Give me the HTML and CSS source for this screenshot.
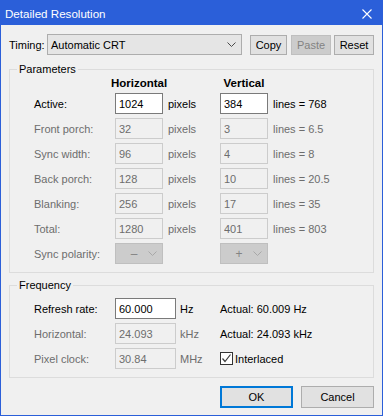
FILE: index.html
```html
<!DOCTYPE html>
<html>
<head>
<meta charset="utf-8">
<link rel="stylesheet" href="styles.css">
</head>
<body>
<div class="window">
  <div class="titlebar">
    <span class="title">Detailed Resolution</span>
    <svg class="close" width="10" height="10" viewBox="0 0 10 10"><path d="M0.5 0.5 L9.5 9.5 M9.5 0.5 L0.5 9.5" stroke="#fff" stroke-width="1.1" fill="none"/></svg>
  </div>
  <div class="content">
    <div class="timing-row">
      <span class="timing-label">Timing:</span>
      <div class="combo combo-timing">
        <span class="combo-text">Automatic CRT</span>
        <svg class="chev" width="9" height="5" viewBox="0 0 9 5"><path d="M0.5 0.5 L4.5 4.5 L8.5 0.5" stroke="#4a4a4a" fill="none"/></svg>
      </div>
      <button class="btn btn-copy">Copy</button>
      <button class="btn btn-paste" disabled>Paste</button>
      <button class="btn btn-reset">Reset</button>
    </div>

    <fieldset class="group">
      <legend>Parameters</legend>
      <div class="param-grid">
        <span></span>
        <div class="head"><span>Horizontal</span></div>
        <span></span>
        <div class="head"><span>Vertical</span></div>
        <span></span>

        <span class="lbl">Active:</span>
        <input class="field" value="1024">
        <span class="unit">pixels</span>
        <input class="field" value="384">
        <span class="unit">lines = 768</span>

        <span class="lbl dim">Front porch:</span>
        <input class="field" value="32" disabled>
        <span class="unit dim">pixels</span>
        <input class="field" value="3" disabled>
        <span class="unit dim">lines = 6.5</span>

        <span class="lbl dim">Sync width:</span>
        <input class="field" value="96" disabled>
        <span class="unit dim">pixels</span>
        <input class="field" value="4" disabled>
        <span class="unit dim">lines = 8</span>

        <span class="lbl dim">Back porch:</span>
        <input class="field" value="128" disabled>
        <span class="unit dim">pixels</span>
        <input class="field" value="10" disabled>
        <span class="unit dim">lines = 20.5</span>

        <span class="lbl dim">Blanking:</span>
        <input class="field" value="256" disabled>
        <span class="unit dim">pixels</span>
        <input class="field" value="17" disabled>
        <span class="unit dim">lines = 35</span>

        <span class="lbl dim">Total:</span>
        <input class="field" value="1280" disabled>
        <span class="unit dim">pixels</span>
        <input class="field" value="401" disabled>
        <span class="unit dim">lines = 803</span>

        <span class="lbl dim">Sync polarity:</span>
        <div class="combo combo-pol">
          <span class="pol-text">&ndash;</span>
          <svg class="chev" width="9" height="5" viewBox="0 0 9 5"><path d="M0.5 0.5 L4.5 4.5 L8.5 0.5" stroke="#a8a8a8" fill="none"/></svg>
        </div>
        <span></span>
        <div class="combo combo-pol">
          <span class="pol-text">+</span>
          <svg class="chev" width="9" height="5" viewBox="0 0 9 5"><path d="M0.5 0.5 L4.5 4.5 L8.5 0.5" stroke="#a8a8a8" fill="none"/></svg>
        </div>
        <span></span>
      </div>
    </fieldset>

    <fieldset class="group group-freq">
      <legend>Frequency</legend>
      <div class="freq-grid">
        <span class="lbl">Refresh rate:</span>
        <input class="field field-wide" value="60.000">
        <span class="unit">Hz</span>
        <span class="actual">Actual: 60.009 Hz</span>

        <span class="lbl dim">Horizontal:</span>
        <input class="field field-wide" value="24.093" disabled>
        <span class="unit dim">kHz</span>
        <span class="actual">Actual: 24.093 kHz</span>

        <span class="lbl dim">Pixel clock:</span>
        <input class="field field-wide" value="30.84" disabled>
        <span class="unit dim">MHz</span>
        <label class="check">
          <span class="box"><svg width="11" height="11" viewBox="0 0 11 11"><path d="M1.5 5.5 L4 8.5 L9.5 1.5" stroke="#3c3c3c" stroke-width="1.2" fill="none"/></svg></span>
          <span>Interlaced</span>
        </label>
      </div>
    </fieldset>

    <div class="actions">
      <button class="btn btn-dlg btn-ok">OK</button>
      <button class="btn btn-dlg">Cancel</button>
    </div>
  </div>
</div>
</body>
</html>
```

FILE: styles.css
```css
html, body {
  margin: 0;
  padding: 0;
  background: #f0f0f0;
}
body {
  font-family: "Liberation Sans", Arial, sans-serif;
  font-size: 11px;
  color: #000;
}
.window {
  width: 383px;
  height: 416px;
  box-sizing: border-box;
  border: 1px solid #2b5fd9;
  background: #f0f0f0;
  display: flex;
  flex-direction: column;
}
.titlebar {
  height: 24px;
  flex: none;
  background: #2b5fd9;
  display: flex;
  align-items: center;
  padding: 0 10px 0 4px;
  color: #fff;
}
.title {
  flex: 1;
  font-size: 11.6px;
  padding-top: 1px;
}
.close {
  display: block;
  margin-top: 1px;
}
.content {
  padding: 9px 8px 0;
}
.timing-row {
  display: flex;
  align-items: center;
  height: 21px;
}
.timing-label {
  width: 38px;
  flex: none;
}
.combo {
  box-sizing: border-box;
  display: flex;
  align-items: center;
  height: 21px;
}
.combo-timing {
  width: 195px;
  margin-right: 8px;
  background: #e5e5e5;
  border: 1px solid #adadad;
  padding: 0 5px 0 3px;
}
.combo-text {
  flex: 1;
}
.chev {
  display: block;
}
.btn {
  box-sizing: border-box;
  height: 20px;
  padding: 0;
  margin: 0;
  font-family: "Liberation Sans", Arial, sans-serif;
  font-size: 11px;
  color: #000;
  background: #e1e1e1;
  border: 1px solid #adadad;
  border-radius: 0;
}
.btn-copy {
  width: 37px;
  margin-right: 4px;
}
.btn-paste {
  width: 40px;
  margin-right: 3px;
  background: #cccccc;
  border-color: #bfbfbf;
  color: #838383;
}
.btn-reset {
  width: 40px;
}
.group {
  margin: 7px 0 0;
  padding: 0;
  border: 1px solid #dcdcdc;
  min-width: 0;
}
.group legend {
  margin-left: 7px;
  padding: 0 2px;
  line-height: 14px;
  font-size: 11px;
}
.group-freq {
  margin-top: 5px;
}
.param-grid {
  display: grid;
  grid-template-columns: 81px 48px 57px 48px auto;
  grid-template-rows: 13px repeat(7, 21px);
  row-gap: 4px;
  align-items: center;
  padding: 0 0 8px 24px;
}
.head {
  display: flex;
  justify-content: center;
  font-weight: bold;
  font-size: 11.5px;
  line-height: 10px;
  white-space: nowrap;
}
.lbl, .unit, .actual {
  white-space: nowrap;
}
.unit {
  padding-left: 5px;
}
.dim {
  color: #6d6d6d;
}
.field {
  box-sizing: border-box;
  width: 48px;
  height: 21px;
  margin: 0;
  padding: 0 3px;
  border: 1px solid #7a7a7a;
  border-radius: 0;
  background: #fff;
  font-family: "Liberation Sans", Arial, sans-serif;
  font-size: 11px;
  color: #000;
  outline: none;
}
.field:disabled {
  border-color: #cccccc;
  background: #f0f0f0;
  color: #6d6d6d;
  -webkit-text-fill-color: #6d6d6d;
}
.field-wide {
  width: 61px;
}
.combo-pol {
  width: 48px;
  background: #cccccc;
  border: 1px solid #bfbfbf;
  padding: 0 5px 0 0;
  color: #838383;
}
.pol-text {
  flex: 1;
  text-align: center;
  padding-left: 4px;
  font-size: 12px;
}
.freq-grid {
  display: grid;
  grid-template-columns: 81px 61px 44px auto;
  grid-template-rows: repeat(3, 21px);
  row-gap: 4px;
  align-items: center;
  padding: 6px 0 8px 24px;
}
.freq-grid .unit {
  padding-left: 4px;
}
.check {
  display: flex;
  align-items: center;
  gap: 2px;
}
.box {
  box-sizing: border-box;
  width: 13px;
  height: 13px;
  border: 1px solid #333;
  background: #fff;
  display: flex;
  align-items: center;
  justify-content: center;
}
.box svg {
  display: block;
}
.actions {
  display: flex;
  justify-content: flex-end;
  gap: 8px;
  margin-top: 8px;
}
.btn-dlg {
  width: 73px;
  height: 22px;
}
.btn-ok {
  border: 2px solid #0078d7;
}
```
